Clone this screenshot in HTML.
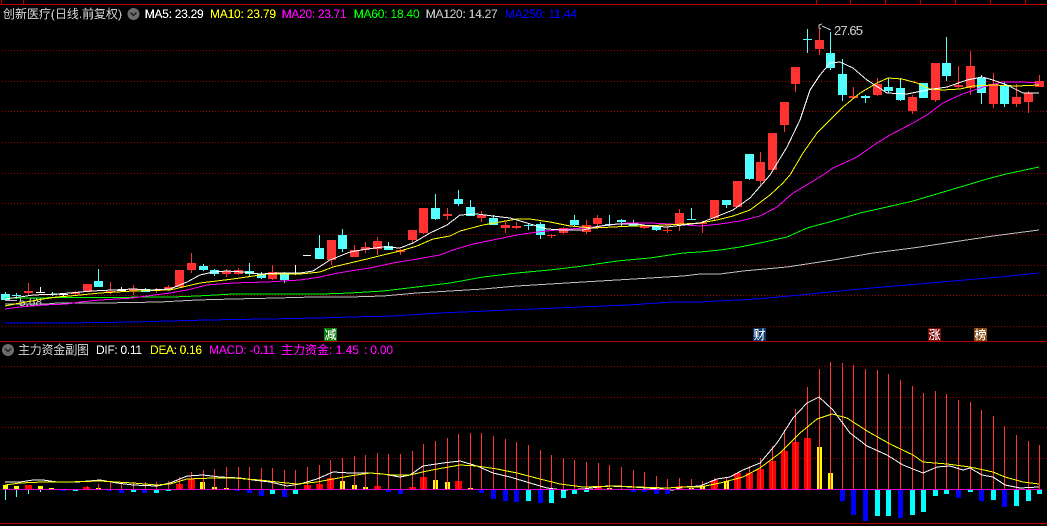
<!DOCTYPE html>
<html><head><meta charset="utf-8"><style>
html,body{margin:0;padding:0;background:#000;width:1047px;height:526px;overflow:hidden}
svg{display:block}
text{font-family:"Liberation Sans","WenQuanYi Zen Hei","Noto Sans CJK SC",sans-serif;font-size:12px;filter:url(#al)}
</style></head><body>
<svg width="1047" height="526" viewBox="0 0 1047 526" xmlns="http://www.w3.org/2000/svg">
<defs><filter id="al" x="-5%" y="-30%" width="110%" height="160%" color-interpolation-filters="sRGB"><feComponentTransfer><feFuncA type="discrete" tableValues="0 0 1 1 1"/></feComponentTransfer></filter></defs>
<g shape-rendering="crispEdges" fill="none">
<path stroke="#c00000" d="M0 4.5H1047"/>
<path stroke="#b00000" d="M0 341.5H1047M0 523.5H1047"/>
<path stroke="#c00000" d="M1.5 0V4M23.5 0V4M816.5 0V4M850.5 0V4M885.5 0V4M920.5 0V4M955.5 0V4M990.5 0V4M1025.5 0V4"/>
<path stroke="#a00000" stroke-dasharray="1 2" d="M2 50.5H1047M2 81.5H1047M2 111.5H1047M2 142.5H1047M2 173.5H1047M2 203.5H1047M2 234.5H1047M2 265.5H1047M2 295.5H1047M2 326.5H1047M2 366.5H1047M2 397.5H1047M2 427.5H1047M2 458.5H1047"/>
</g>
<text x="3" y="18" fill="#c0c0c0" textLength="119">创新医疗(日线.前复权)</text>
<circle cx="133.5" cy="14" r="6" fill="#6c6c6c"/>
<path d="M130.5 12.5L133.5 15.5L136.5 12.5" fill="none" stroke="#1c1c1c" stroke-width="1.4"/>
<text x="144.7" y="18" fill="#fff" textLength="59">MA5: 23.29</text>
<text x="210" y="18" fill="#ff0" textLength="66">MA10: 23.79</text>
<text x="281.7" y="18" fill="#f0f" textLength="65">MA20: 23.71</text>
<text x="353.7" y="18" fill="#0f0" textLength="66">MA60: 18.40</text>
<text x="425.7" y="18" fill="#c0c0c0" textLength="72">MA120: 14.27</text>
<text x="505" y="18" fill="#0000ff" textLength="72">MA250: 11.44</text>
<text x="19" y="306" fill="#c0c0c0" textLength="23">5.68</text>
<path d="M5 300.5H17" stroke="#c0c0c0" shape-rendering="crispEdges"/>
<g shape-rendering="crispEdges">
<path fill="#ff3232" d="M24 291h9v2h-9zM71 292h9v2h-9zM83 284h9v8h-9zM106 291h9v1h-9zM129 289h9v2h-9zM152 290h9v1h-9zM164 287h9v3h-9zM175 270h9v17h-9zM187 263h9v7h-9zM222 271h9v3h-9zM234 270h9v4h-9zM268 272h9v7h-9zM327 240h9v20h-9zM350 250h9v7h-9zM361 247h9v3h-9zM373 241h9v8h-9zM396 250h9v2h-9zM408 230h9v10h-9zM419 208h9v25h-9zM443 214h9v2h-9zM477 215h9v3h-9zM501 225h9v3h-9zM512 226h9v2h-9zM547 235h9v1h-9zM559 228h9v5h-9zM582 225h9v7h-9zM593 218h9v6h-9zM640 225h9v3h-9zM663 230h9v1h-9zM675 213h9v12h-9zM698 223h9v1h-9zM710 200h9v18h-9zM733 181h9v26h-9zM756 162h9v19h-9zM768 133h9v37h-9zM780 102h9v23h-9zM791 67h9v17h-9zM815 40h9v9h-9zM849 96h9v2h-9zM873 84h9v11h-9zM908 97h9v14h-9zM931 63h9v37h-9zM954 85h9v2h-9zM966 66h9v22h-9zM989 84h9v20h-9zM1012 97h9v7h-9zM1024 93h9v9h-9zM1035 81h9v6h-9z"/>
<path stroke="#ff3232" fill="none" d="M28.5 283V295M75.5 291V295M110.5 282V294M133.5 285V295M156.5 288V293M168.5 285V291M191.5 253V273M226.5 269V277M238.5 268V275M272.5 265V280M331.5 260V265M354.5 245V257M365.5 242V253M377.5 237V255M400.5 249V255M412.5 240V244M423.5 233V234M447.5 208V220M481.5 211V222M505.5 222V233M516.5 222V229M551.5 234V238M563.5 227V234M586.5 220V234M597.5 215V229M644.5 228V229M667.5 226V233M679.5 209V231M702.5 221V233M714.5 218V221M760.5 152V185M784.5 125V132M795.5 84V92M819.5 28V55M853.5 87V99M877.5 78V96M912.5 95V114M935.5 100V102M958.5 66V88M970.5 51V95M993.5 73V108M1016.5 84V107M1028.5 91V113M1039.5 75V87"/>
<path fill="#54ffff" d="M1 294h9v6h-9zM12 295h9v1h-9zM48 294h9v1h-9zM94 281h9v6h-9zM141 289h9v3h-9zM199 266h9v4h-9zM210 270h9v4h-9zM245 271h9v3h-9zM257 274h9v4h-9zM280 274h9v6h-9zM315 248h9v11h-9zM338 235h9v14h-9zM384 246h9v4h-9zM431 208h9v11h-9zM454 199h9v5h-9zM466 207h9v9h-9zM489 218h9v7h-9zM524 225h9v1h-9zM536 224h9v11h-9zM570 220h9v5h-9zM605 224h9v1h-9zM617 220h9v2h-9zM629 223h9v3h-9zM652 226h9v4h-9zM687 219h9v1h-9zM722 200h9v5h-9zM745 154h9v25h-9zM803 39h9v1h-9zM826 53h9v15h-9zM838 74h9v21h-9zM861 96h9v2h-9zM884 87h9v4h-9zM896 88h9v12h-9zM919 83h9v15h-9zM942 63h9v13h-9zM977 78h9v15h-9zM1000 86h9v18h-9z"/>
<path stroke="#54ffff" fill="none" d="M5.5 292V300M16.5 293V299M52.5 292V296M98.5 269V287M145.5 288V292M203.5 264V271M214.5 269V276M249.5 263V277M261.5 272V279M284.5 272V283M319.5 235V259M342.5 229V252M388.5 242V250M435.5 194V220M458.5 190V206M470.5 200V216M493.5 215V225M528.5 223V230M540.5 222V239M574.5 215V227M609.5 215V226M621.5 219V226M633.5 220V226M656.5 230V231M691.5 208V220M726.5 205V208M749.5 179V180M807.5 29V53M830.5 32V70M842.5 59V101M865.5 95V103M888.5 78V93M900.5 78V101M946.5 37V81M981.5 75V104M1004.5 82V107"/>
<path fill="#fff" d="M36 292h9v1h-9zM59 294h9v1h-9zM117 290h9v1h-9zM291 273h9v1h-9zM303 255h8v1h-8z"/>
<path stroke="#fff" fill="none" d="M40.5 287V293M63.5 294V297M121.5 287V292M295.5 265V275"/>
</g>
<g fill="none" shape-rendering="crispEdges">
<polyline stroke="#0000ff" stroke-width="1" points="5,323 67,323 133,322 207,320 267,319 317,318 350,317 393,316 440,313 487,311 533,309 580,307 627,305 673,302 700,302 757,299 800,295 860,289 907,285 953,281 1000,277 1039,273"/>
<polyline stroke="#c0c0c0" stroke-width="1" points="5,304 47,304 57,303 103,303 160,302 197,300 233,299 277,298 313,297 350,297 383,296 417,293 450,291 483,289 517,286 550,284 583,282 617,280 650,278 683,276 700,274 720,274 743,271 787,267 833,260 873,253 913,248 953,242 993,236 1039,230"/>
<polyline stroke="#00ff00" stroke-width="1" points="5,298 173,297 197,296 233,294 323,294 350,293 383,291 417,287 450,283 483,277 517,273 550,270 583,266 617,261 650,258 683,253 700,252 720,250 740,247 760,243 787,237 807,228 833,221 860,213 887,207 913,201 940,193 967,185 987,179 1006,174 1039,167"/>
<polyline stroke="#ff00ff" stroke-width="1" points="5,309 20,307 43,305 67,304 80,302 100,300 133,298 147,296 170,293 187,290 207,285 233,283 267,282 300,280 320,277 333,274 350,271 370,268 393,263 417,259 440,255 453,250 473,244 493,240 517,235 537,232 557,230 583,228 603,226 627,223 650,223 670,224 700,226 720,224 740,221 760,216 777,207 793,193 810,183 823,175 833,168 857,157 877,143 890,135 913,123 927,115 943,103 960,95 983,87 1002,82 1023,82 1039,83"/>
<polyline stroke="#ffff00" stroke-width="1" points="5,306 20,303 43,299 57,297 70,296 100,293 133,291 170,290 200,283 233,279 267,274 300,274 320,272 333,267 350,263 367,259 383,255 400,251 417,246 433,239 450,236 460,231 483,225 500,222 517,219 530,219 550,222 570,226 593,228 613,227 633,226 667,225 683,224 700,223 717,220 733,216 750,210 770,195 783,183 790,175 803,153 817,133 827,123 843,107 860,93 877,83 888,78 902,79 917,83 930,89 943,90 960,89 973,86 993,85 1017,86 1039,85"/>
<polyline stroke="#ffffff" stroke-width="1" points="5,299 20,297 33,295 57,294 70,293 92,291 113,290 133,289 150,290 170,289 187,282 200,275 213,272 227,271 243,272 260,274 280,273 300,273 313,271 330,260 350,252 367,249 383,247 400,248 413,243 430,233 447,225 460,215 477,214 493,216 510,218 527,223 547,229 563,230 583,230 600,226 617,224 637,224 650,226 667,227 683,225 700,223 713,218 733,210 750,198 770,175 787,147 800,120 810,90 820,75 830,63 840,62 853,68 867,80 887,93 907,94 927,90 947,87 967,80 982,77 993,80 1007,85 1023,93 1039,93"/>
</g>
<path d="M822 24L819 25L819 28L821 29M822 26L831 30" fill="none" stroke="#c0c0c0" shape-rendering="crispEdges"/>
<text x="834" y="35" fill="#c0c0c0" style="font-size:13px" textLength="29">27.65</text>
<rect x="324" y="328" width="13" height="13" fill="#0a7a0a"/><text x="324.5" y="339" fill="#fff">减</text>
<rect x="753" y="328" width="13" height="13" fill="#0a3a6e"/><text x="753.5" y="339" fill="#fff">财</text>
<rect x="928" y="328" width="13" height="13" fill="#7a0a0a"/><text x="928.5" y="339" fill="#fff">涨</text>
<rect x="974" y="328" width="13" height="13" fill="#8a4a10"/><text x="974.5" y="339" fill="#fff">榜</text>
<circle cx="8" cy="350" r="6" fill="#6c6c6c"/>
<path d="M5 348.5L8 351.5L11 348.5" fill="none" stroke="#1c1c1c" stroke-width="1.4"/>
<text x="18" y="354" fill="#c0c0c0" textLength="71">主力资金副图</text>
<text x="96" y="354" fill="#fff" textLength="46">DIF: 0.11</text>
<text x="150" y="354" fill="#ff0" textLength="52">DEA: 0.16</text>
<text x="209" y="354" fill="#f0f" textLength="66">MACD: -0.11</text>
<text x="281" y="354" fill="#f0f" textLength="78">主力资金: 1.45</text>
<text x="364" y="354" fill="#f0f" textLength="29">: 0.00</text>
<g shape-rendering="crispEdges">
<path fill="#ff0000" d="M25 485H32V489H25zM83 487H90V489H83zM176 484H183V489H176zM188 479H195V489H188zM304 485H311V489H304zM316 484H323V489H316zM327 478H334V489H327zM374 486H381V489H374zM409 487H416V489H409zM420 477H427V489H420zM455 481H462V489H455zM595 487H602V489H595zM676 486H683V489H676zM711 480H718V489H711zM734 473H741V489H734zM746 473H753V489H746zM757 469H764V489H757zM769 461H776V489H769zM781 451H788V489H781zM792 442H799V489H792zM804 438H811V489H804z"/>
<path fill="#ffff00" d="M3 485H8V489H3zM14 486H19V489H14zM38 486H43V489H38zM49 488H54V489H49zM96 488H101V489H96zM200 482H205V489H200zM212 487H217V489H212zM224 488H229V489H224zM340 481H345V489H340zM352 485H357V489H352zM363 487H368V489H363zM433 480H438V489H433zM445 482H450V489H445zM468 488H473V489H468zM607 488H612V489H607zM689 488H694V489H689zM700 486H705V489H700zM724 481H729V489H724zM817 447H822V489H817zM828 473H833V489H828z"/>
<path fill="#0000ff" d="M61 490H66V491H61zM107 490H112V491H107zM119 490H124V493H119zM142 490H147V493H142zM235 490H240V491H235zM247 490H252V493H247zM259 490H264V496H259zM282 490H287V497H282zM386 490H391V492H386zM398 490H403V494H398zM479 490H484V493H479zM491 490H496V499H491zM503 490H508V501H503zM514 490H519V502H514zM538 490H543V503H538zM631 490H636V492H631zM642 490H647V492H642zM654 490H659V494H654zM665 490H670V494H665zM840 490H845V501H840zM851 490H856V515H851zM863 490H868V521H863zM898 490H903V518H898zM956 490H961V498H956zM979 490H984V501H979zM1002 490H1007V507H1002z"/>
<path fill="#00ffff" d="M73 490H78V491H73zM131 490H136V492H131zM154 490H159V493H154zM166 490H171V491H166zM270 490H275V494H270zM293 490H298V494H293zM526 490H531V501H526zM549 490H554V503H549zM561 490H566V498H561zM572 490H577V494H572zM584 490H589V492H584zM875 490H880V516H875zM886 490H891V516H886zM910 490H915V515H910zM921 490H926V512H921zM933 490H938V496H933zM944 490H949V494H944zM968 490H973V492H968zM991 490H996V500H991zM1014 490H1019V506H1014zM1026 490H1031V501H1026zM1037 490H1042V494H1037z"/>
<path fill="none" stroke="#54ffff" d="M5.5 490V500M16.5 490V497M28.5 490V494M40.5 490V492"/>
<path fill="none" stroke="#ff3232" d="M87.5 486V489M98.5 484V489M110.5 483V489M121.5 483V489M133.5 482V489M145.5 482V489M156.5 482V489M168.5 481V489M179.5 477V489M191.5 472V489M203.5 470V489M214.5 469V489M226.5 467V489M238.5 467V489M249.5 467V489M261.5 468V489M272.5 468V489M284.5 470V489M295.5 470V489M307.5 467V489M319.5 465V489M330.5 460V489M342.5 458V489M354.5 456V489M365.5 455V489M377.5 453V489M388.5 454V489M400.5 454V489M412.5 451V489M423.5 444V489M435.5 441V489M447.5 438V489M458.5 434V489M470.5 433V489M481.5 433V489M493.5 436V489M505.5 439V489M516.5 442V489M528.5 445V489M540.5 450V489M551.5 455V489M563.5 458V489M574.5 460V489M586.5 462V489M598.5 463V489M609.5 465V489M621.5 467V489M633.5 470V489M644.5 472V489M656.5 476V489M667.5 479V489M679.5 478V489M691.5 479V489M702.5 481V489M714.5 478V489M726.5 477V489M737.5 472V489M749.5 466V489M760.5 458V489M772.5 446V489M784.5 430V489M795.5 409V489M807.5 387V489M819.5 369V489M830.5 362V489M842.5 363V489M853.5 365V489M865.5 369V489M877.5 370V489M888.5 374V489M900.5 380V489M912.5 386V489M923.5 393V489M935.5 391V489M946.5 394V489M958.5 400V489M970.5 402V489M981.5 410V489M993.5 416V489M1004.5 426V489M1016.5 435V489M1028.5 441V489M1039.5 445V489"/>
<polyline fill="none" stroke="#fff" stroke-width="1" points="5,482 20,482 33,480 43,480 57,482 77,482 100,480 117,483 133,485 157,486 170,483 187,476 203,475 220,477 240,478 253,480 270,482 287,486 300,484 317,479 333,472 350,473 370,473 383,474 400,477 410,475 423,466 443,463 460,461 477,466 493,473 510,477 530,483 547,488 563,490 583,489 607,486 633,487 660,489 673,490 683,487 700,486 717,479 730,477 743,470 760,463 777,443 793,418 807,403 819,397 833,410 850,433 867,446 887,455 903,465 923,473 937,467 950,466 963,470 970,468 982,475 993,477 1005,485 1020,488 1039,487"/>
<polyline fill="none" stroke="#ff0" stroke-width="1" points="5,485 20,483 43,482 67,482 100,481 133,483 157,485 170,484 187,479 213,478 233,478 260,480 277,482 297,484 317,482 333,479 350,476 370,473 393,475 410,475 427,471 443,468 460,465 477,466 497,469 517,473 540,479 560,484 583,487 617,486 637,487 667,488 683,487 700,487 720,483 743,477 760,468 780,453 800,433 817,419 832,414 847,418 867,431 890,444 913,455 923,462 947,464 970,467 993,472 1005,477 1023,482 1039,484"/>
<path fill="none" stroke="#e000d0" d="M3 489.5H1042"/>
</g>
</svg>
</body></html>
